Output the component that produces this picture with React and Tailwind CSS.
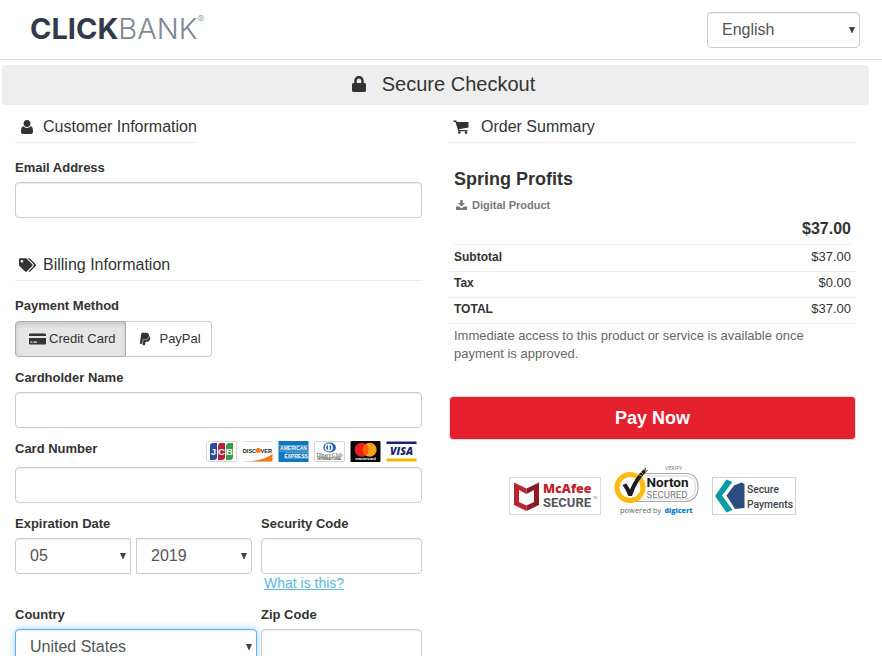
// src/App.jsx
import React, { useState } from 'react';
import { FaLock, FaTags, FaPaypal } from 'react-icons/fa';

const fieldClass =
  'block h-9 w-full rounded border px-3.5 text-base text-[#555] outline-none focus:border-[#66afe9]';
const plainField = 'border-[#ccc] bg-white shadow-[inset_0_1px_1px_rgba(0,0,0,0.075)]';
const activeField =
  'border-[#66afe9] bg-white shadow-[inset_0_1px_1px_rgba(0,0,0,0.075),0_0_8px_rgba(102,175,233,0.6)]';

const UserIcon = () => (
  <svg viewBox="0 0 12 14" className="h-3.5 w-3" fill="currentColor" aria-hidden="true">
    <path d="M6 0C8.2 0 9.4 1.5 9.4 3.500S8 7 6 7 2.600 5.500 2.600 3.500 3.800 0 6 0Z" />
    <path d="M2.600 6.300C3.400 7.500 4.600 8 6 8S8.600 7.500 9.400 6.300C11.500 6.500 12 8.500 12 11V12Q12 14 10 14H2Q0 14 0 12V11C0 8.500 0.500 6.500 2.600 6.300Z" />
  </svg>
);

const CartIcon = () => (
  <svg viewBox="0 0 16 14" className="h-3.5 w-4" fill="currentColor" aria-hidden="true">
    <path d="M0.500 0.500H3.200L3.800 2H15.500V7.500L6 9.200 6.300 10H14.500V11.300H5.300L2.500 2H0.500Z" />
    <circle cx="6.300" cy="12.600" r="1.300" />
    <circle cx="13" cy="12.600" r="1.300" />
  </svg>
);

const CreditCardIcon = () => (
  <svg viewBox="0 0 17 12" className="h-3 w-[17px]" fill="currentColor" aria-hidden="true">
    <path d="M1 0.500H16Q17 0.500 17 1.500V3H0V1.500Q0 0.500 1 0.500Z" />
    <path fillRule="evenodd" d="M0 5H17V10.500Q17 11.500 16 11.500H1Q0 11.500 0 10.500ZM1.500 8.500V9.700H3.500V8.500ZM4.500 8.500V9.700H8V8.500Z" />
  </svg>
);

const DownloadIcon = () => (
  <svg viewBox="0 0 11 10" className="h-2.5 w-[11px]" fill="currentColor" aria-hidden="true">
    <path d="M4.300 0H6.700V3H9L5.500 6.500 2 3H4.300Z" />
    <path d="M0.500 6.500H3L5.500 8.500 8 6.500H10.500Q11 6.500 11 7V9.400Q11 10 10.500 10H0.500Q0 10 0 9.400V7Q0 6.500 0.500 6.500Z" />
  </svg>
);

const Select = ({ id, value, options, onChange, active = false, className = '', ...rest }) => (
  <div className="relative w-full">
    <select
      id={id}
      value={value}
      onChange={(e) => onChange(e.target.value)}
      className={`${fieldClass} ${active ? activeField : plainField} appearance-none ${className}`}
      {...rest}
    >
      {options.map((option) => (
        <option key={option}>{option}</option>
      ))}
    </select>
    <svg
      viewBox="0 0 6 6"
      className="pointer-events-none absolute top-[15px] right-[5px] size-1.5"
      fill="#444"
      aria-hidden="true"
    >
      <path d="M0 0H6L3.400 6H2.600Z" />
    </svg>
  </div>
);

const Input = ({ id, ...rest }) => <input id={id} className={`${fieldClass} ${plainField}`} {...rest} />;

const Label = ({ htmlFor, children }) => (
  <label htmlFor={htmlFor} className="mb-[3px] block text-[13px] leading-[22px] font-bold">
    {children}
  </label>
);

const SectionTitle = ({ icon, children, className = '' }) => (
  <h2 className={`mb-3.5 flex h-[33px] items-center border-b border-[#eee] pt-0.5 text-base ${className}`}>
    <span className="flex w-7 shrink-0 justify-center pr-1">{icon}</span>
    {children}
  </h2>
);

// Accepted card brands
const CardLogos = () => (
  <div className="flex items-end gap-[5px] pr-[5px]">
    <svg viewBox="0 0 31 21" className="h-[21px] w-[31px]" role="img" aria-label="JCB">
      <rect x="0.5" y="0.5" width="30" height="20" rx="1" fill="#fff" stroke="#d5d5d5" />
      <path d="M7 2H11V16Q11 19 8 19H4V5Q4 2 7 2Z" fill="#2a4c9b" />
      <path d="M15 2H19V16Q19 19 16 19H12V5Q12 2 15 2Z" fill="#b3243c" />
      <path d="M23 2H27V16Q27 19 24 19H20V5Q20 2 23 2Z" fill="#33a048" />
      <g fill="#fff" fontFamily="Liberation Sans, sans-serif" fontSize="9.5" fontWeight="700" textAnchor="middle">
        <text x="7.4" y="14">J</text>
        <text x="15.5" y="14">C</text>
        <text x="23.5" y="14">B</text>
      </g>
    </svg>
    <svg viewBox="0 0 31 21" className="h-[21px] w-[31px]" role="img" aria-label="Discover">
      <path d="M1 0.5H30M1 20.5H30" stroke="#e2e2e2" />
      <path d="M7 20.5Q22 19 30.5 13V20.5Z" fill="#f47b20" />
      <circle cx="16.3" cy="9.6" r="2.5" fill="#f47b20" />
      <g fill="#222" fontFamily="Liberation Sans, sans-serif" fontSize="5.6" fontWeight="700">
        <text x="0.8" y="11.6">DISC</text>
        <text x="18.6" y="11.6">VER</text>
      </g>
    </svg>
    <svg viewBox="0 0 31 21" className="h-[21px] w-[31px]" role="img" aria-label="American Express">
      <rect x="0.5" width="30" height="21" rx="0.5" fill="#0f77be" />
      <path d="M1 4.500H30M1 10H30M7 11.700H30M7 17.200H30" stroke="#fff" strokeWidth="0.5" opacity="0.7" />
      <g fill="#fff" fontFamily="Liberation Sans, sans-serif" fontWeight="700" textAnchor="middle" fontSize="5">
        <text x="15.500" y="9.200">AMERICAN</text>
        <text x="18" y="16.500">EXPRESS</text>
      </g>
    </svg>
    <svg viewBox="0 0 31 21" className="h-[21px] w-[31px]" role="img" aria-label="Diners Club International">
      <rect x="0.5" y="0.5" width="30" height="20" rx="1" fill="#fff" stroke="#d5d5d5" />
      <ellipse cx="15.6" cy="6.500" rx="6.3" ry="5" fill="#1d5fa9" />
      <circle cx="14.8" cy="6.500" r="4.1" fill="#fff" />
      <path d="M13.9 3.500Q10.500 6.500 13.900 9.500ZM15.700 3.500Q19.100 6.500 15.700 9.500Z" fill="#1d5fa9" />
      <g fill="#444" textAnchor="middle">
        <text x="15.5" y="16" fontSize="5.4" fontFamily="Liberation Serif, serif">Diners Club</text>
        <text x="15.5" y="19.4" fontSize="3" fontWeight="700" fontFamily="Liberation Sans, sans-serif">INTERNATIONAL</text>
      </g>
    </svg>
    <svg viewBox="0 0 31 21" className="h-[21px] w-[31px]" role="img" aria-label="Mastercard">
      <rect x="0.5" width="30" height="21" rx="1" fill="#050505" />
      <circle cx="11.6" cy="8.8" r="7" fill="#eb1c24" />
      <circle cx="19.7" cy="8.8" r="7" fill="#f79f1a" />
      <path d="M15.65 3.1A7 7 0 0 1 15.65 14.5A7 7 0 0 1 15.65 3.1Z" fill="#ff5f00" />
      <text x="15.6" y="19.3" fill="#fff" fontSize="3.8" fontWeight="700" textAnchor="middle" fontFamily="Liberation Sans, sans-serif">
        mastercard
      </text>
    </svg>
    <svg viewBox="0 0 31 21" className="h-[21px] w-[31px]" role="img" aria-label="Visa">
      <rect x="0.5" width="30" height="21" fill="#fff" />
      <path d="M0.5 0.500H30.5V3H0.5Z" fill="#1a1f71" />
      <path d="M0.5 17.5H30.5V20.5H0.5Z" fill="#f7b600" />
      <text x="15.6" y="14.300" fill="#1a1f71" fontSize="10.500" fontWeight="800" fontStyle="italic" textAnchor="middle" fontFamily="Open Sans, sans-serif">
        VISA
      </text>
    </svg>
  </div>
);

const McAfeeBadge = () => (
  <svg viewBox="0 0 92 38" className="h-[38px] w-[92px]" role="img" aria-label="McAfee Secure">
    <rect x="0.5" y="0.5" width="91" height="37" fill="#fff" stroke="#dcdcdc" />
    <path d="M5 5.500L17.500 11.500V17L10 13V25L17.500 28.500V34L5 28Z" fill="#b92632" />
    <path d="M30 5.500L17.500 11.500V17L25 13V25L17.500 28.500V34L30 28Z" fill="#8f1a26" />
    <text x="34" y="16" fill="#c01f2f" fontSize="12.500" fontWeight="800" fontFamily="Open Sans, sans-serif">McAfee</text>
    <text x="34" y="29.500" fill="#53565a" fontSize="13" fontWeight="700" fontFamily="Roboto, sans-serif">SECURE</text>
    <text x="84" y="22" fill="#777" fontSize="3" fontFamily="Liberation Sans, sans-serif">TM</text>
  </svg>
);

const NortonBadge = () => (
  <svg viewBox="0 0 85 51" className="h-[51px] w-[85px]" role="img" aria-label="Norton Secured, powered by DigiCert">
    <path d="M25 9.500H71Q84 9.500 84 23T71 37.500H20" fill="none" stroke="#a9a9a9" strokeWidth="1.2" />
    <path d="M27 12H70.500Q81.500 12 81.500 23.500T70.500 35H27" fill="none" stroke="#c6c6c6" strokeWidth="0.8" />
    <circle cx="16" cy="23.500" r="13" fill="#fff" stroke="#fdbb11" strokeWidth="5" />
    <path d="M8.500 21L12.500 19.500 16 25.500Q20 15 29 6L32 3.500 31.500 7 34.500 5.500Q23 16 18 32H14.500Q12 26 8.500 21Z" fill="#1c1c1c" />
    <path d="M27 8L29 10M30 5L32 8M25 11L28 12" stroke="#fdbb11" strokeWidth="0.8" />
    <text x="51" y="5.500" fill="#777" fontSize="5.500" fontFamily="Open Sans, sans-serif">VERIFY</text>
    <text x="32.500" y="23" fill="#1c1c1c" fontSize="13.500" fontWeight="700" fontFamily="Roboto, sans-serif">Norton</text>
    <text x="32.500" y="34" fill="#777" fontSize="9.500" fontFamily="Roboto, sans-serif">SECURED</text>
    <text x="6" y="48.500" fill="#666" fontSize="7.500" fontFamily="Open Sans, sans-serif">powered by</text>
    <text x="50.500" y="48.500" fill="#0b7fca" fontSize="7" fontWeight="800" fontFamily="Open Sans, sans-serif">digicert</text>
  </svg>
);

const SecurePaymentsBadge = () => (
  <svg viewBox="0 0 84 38" className="h-[38px] w-[84px]" role="img" aria-label="Secure Payments">
    <rect x="0.5" y="0.5" width="83" height="37" fill="#fff" stroke="#d2d2d2" />
    <path d="M14.500 2.500L20.500 5 10 18.500 20.500 33 14.500 35.500 3 19Z" fill="#0a9aa6" />
    <path d="M14.500 18.500L22 8.500 29.500 5.500 32.500 7V31L23 32Z" fill="#2b4c7e" />
    <g fill="#3d4248" fontSize="10.300" fontWeight="500" fontFamily="Roboto, sans-serif">
      <text x="35" y="15.500">Secure</text>
      <text x="35" y="30.500">Payments</text>
    </g>
  </svg>
);

const Header = () => {
  const [language, setLanguage] = useState('English');

  return (
    <header className="flex h-[60px] items-center justify-between border-b border-[#ddd] pr-[22px] pl-[30px]">
      <a
        href="#home"
        className="flex items-start pb-0.5 font-['Inter',sans-serif] text-[29px] leading-8 text-[#303b49]"
        aria-label="ClickBank"
      >
        <span className="font-bold">CLICK</span>
        <span className="font-light text-[#7d8893]">BANK</span>
        <span className="text-[10px] leading-3 text-[#a5adb5]">®</span>
      </a>
      <div className="w-[153px]">
        <Select
          id="language"
          aria-label="Language"
          value={language}
          onChange={setLanguage}
          options={['English', 'Español', 'Français', 'Deutsch']}
        />
      </div>
    </header>
  );
};

const PaymentForm = () => {
  const [method, setMethod] = useState('card');
  const [month, setMonth] = useState('05');
  const [year, setYear] = useState('2019');
  const [country, setCountry] = useState('United States');

  const methodClass = (id) =>
    method === id
      ? 'border-[#adadad] bg-[#e6e6e6] shadow-[inset_0_3px_5px_rgba(0,0,0,0.125)]'
      : 'border-[#ccc] bg-white';

  return (
    <form className="min-w-0 flex-1" onSubmit={(e) => e.preventDefault()}>
      <SectionTitle icon={<UserIcon />} className="w-fit">Customer Information</SectionTitle>
      <Label htmlFor="email">Email Address</Label>
      <Input id="email" type="email" />

      <SectionTitle icon={<FaTags className="h-4 w-[17px]" />} className="mt-[30px]">
        Billing Information
      </SectionTitle>

      <div className="flex flex-col gap-2.5">
        {/* Payment method toggle */}
        <div role="group" aria-labelledby="method-label">
          <p id="method-label" className="mb-1 text-[13px] leading-[22px] font-bold">Payment Method</p>
          <div className="flex text-[13px]">
            <button
              type="button"
              aria-pressed={method === 'card'}
              onClick={() => setMethod('card')}
              className={`flex h-9 items-center gap-[3px] rounded-l border pr-2.5 pl-[13px] ${methodClass('card')}`}
            >
              <CreditCardIcon />
              Credit Card
            </button>
            <button
              type="button"
              aria-pressed={method === 'paypal'}
              onClick={() => setMethod('paypal')}
              className={`flex h-9 items-center gap-2 rounded-r border border-l-0 pr-2.5 pl-[13px] ${methodClass('paypal')}`}
            >
              <FaPaypal className="h-3.5 w-3" />
              PayPal
            </button>
          </div>
        </div>

        <div>
          <Label htmlFor="cardholder">Cardholder Name</Label>
          <Input id="cardholder" type="text" />
        </div>

        <div>
          <div className="mb-[5px] flex h-6 justify-between">
            <label htmlFor="card-number" className="text-[13px] leading-[22px] font-bold">Card Number</label>
            <CardLogos />
          </div>
          <Input id="card-number" type="text" inputMode="numeric" />
        </div>

        <div className="grid grid-cols-[246fr_161fr]">
          <div className="pr-[9px]">
            <Label htmlFor="exp-month">Expiration Date</Label>
            <div className="flex gap-[5px]">
              <Select
                id="exp-month"
                value={month}
                onChange={setMonth}
                options={['01', '02', '03', '04', '05', '06', '07', '08', '09', '10', '11', '12']}
                className="rounded-r-none"
              />
              <Select
                id="exp-year"
                aria-label="Expiration year"
                value={year}
                onChange={setYear}
                options={['2019', '2020', '2021', '2022', '2023', '2024']}
                className="rounded-l-none"
              />
            </div>
          </div>
          <div>
            <Label htmlFor="cvv">Security Code</Label>
            <Input id="cvv" type="text" inputMode="numeric" />
            <a href="#security-code" className="ml-[3px] block w-fit pb-0.5 text-sm leading-[18px] text-[#5bb8de] underline">
              What is this?
            </a>
          </div>
        </div>

        <div className="grid grid-cols-[246fr_161fr]">
          <div className="pr-1">
            <Label htmlFor="country">Country</Label>
            <Select
              id="country"
              value={country}
              onChange={setCountry}
              options={['United States', 'Canada', 'United Kingdom', 'Australia']}
              active
            />
          </div>
          <div>
            <Label htmlFor="zip">Zip Code</Label>
            <Input id="zip" type="text" />
          </div>
        </div>
      </div>
    </form>
  );
};

const totals = [
  { label: 'Subtotal', amount: '$37.00' },
  { label: 'Tax', amount: '$0.00' },
  { label: 'TOTAL', amount: '$37.00' }
];

const OrderSummary = () => (
  <section className="min-w-0 flex-1">
    <SectionTitle icon={<CartIcon />} className="gap-1">
      Order Summary
    </SectionTitle>

    <div className="mx-[5px] border-b border-[#eee] pt-2.5 pb-[3px]">
      <h3 className="text-lg leading-6 font-bold">Spring Profits</h3>
      <p className="mt-1 flex items-center gap-[5px] pl-0.5 text-[11px] leading-5 font-bold text-[#777]">
        <DownloadIcon />
        Digital Product
      </p>
      <p className="mt-0.5 text-right text-base leading-6 font-bold">$37.00</p>
    </div>

    <table className="w-full border-collapse leading-5">
      <tbody>
        {totals.map(({ label, amount }) => (
          <tr key={label} className="border-b border-[#eee]">
            <th scope="row" className="h-[26px] pb-0.5 pl-[5px] text-left text-xs font-bold">{label}</th>
            <td className="h-[26px] pr-[5px] pb-0.5 text-right text-[13px]">{amount}</td>
          </tr>
        ))}
      </tbody>
    </table>

    <p className="px-[5px] pt-[3px] text-[13px] leading-[18px] text-[#666]">
      Immediate access to this product or service is available once payment is approved.
    </p>

    <button
      type="button"
      className="mt-[33px] h-11 w-full rounded-sm border border-[#f0d8da] bg-[#e4202e] text-lg font-bold text-white"
    >
      Pay Now
    </button>

    <div className="mt-6 flex items-end justify-center gap-[13px]">
      <McAfeeBadge />
      <NortonBadge />
      <SecurePaymentsBadge />
    </div>
  </section>
);

const App = () => (
  <div className="min-h-screen bg-white font-['Liberation_Sans',Arial,sans-serif] text-[#333]">
    <Header />
    <h1 className="mt-[5px] mr-[13px] ml-0.5 flex h-10 items-center justify-center gap-4 rounded bg-[#eee] pb-0.5 pl-4 text-xl">
      <FaLock className="h-4 w-3.5" />
      Secure Checkout
    </h1>
    <main className="mt-[5px] flex gap-[27px] pr-[26px] pl-[15px]">
      <PaymentForm />
      <OrderSummary />
    </main>
  </div>
);

export default App;
